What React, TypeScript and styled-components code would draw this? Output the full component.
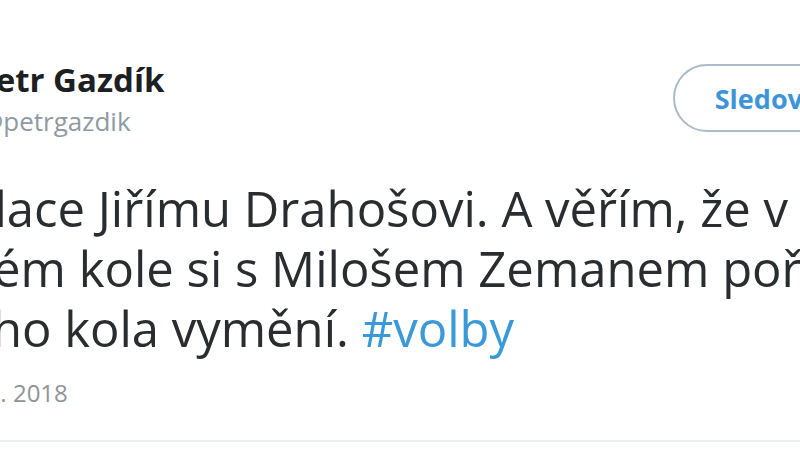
import React from "react";
import styled, { createGlobalStyle } from "styled-components";

const GlobalStyle = createGlobalStyle`
  html, body {
    margin: 0;
    padding: 0;
    background: #ffffff;
    overflow: hidden;
  }
  body {
    width: 800px;
    height: 450px;
    font-family: "Open Sans", "Noto Sans", sans-serif;
  }
`;

const Viewport = styled.div`
  width: 800px;
  height: 450px;
  overflow: hidden;
  position: relative;
`;

const Card = styled.article`
  width: 1100px;
  margin-left: -118px;
  padding-top: 60px;
  display: flex;
  flex-direction: column;
`;

const Header = styled.header`
  display: flex;
  align-items: center;
  padding-left: 93px;
  width: 1000px;
  box-sizing: border-box;
`;

const Names = styled.div`
  display: flex;
  flex-direction: column;
  flex: 1;
`;

const Name = styled.div`
  font-size: 33px;
  font-weight: 700;
  color: #1c2022;
  line-height: 40px;
`;

const Handle = styled.div`
  font-size: 26px;
  color: #8e9aa3;
  line-height: 30px;
  margin-top: 6px;
  margin-left: 5px;
`;

const FollowButton = styled.button`
  margin-left: auto;
  height: 68px;
  padding: 0 40px;
  border-radius: 34px;
  border: 2px solid #a9bcc8;
  background: #ffffff;
  color: #3d95d8;
  font-family: "Open Sans", "Noto Sans", sans-serif;
  font-size: 27px;
  font-weight: 700;
  transform: translate(-9px, 0px);
`;

const Text = styled.div`
  margin: 42px 0 0 -22px;
  font-size: 49px;
  line-height: 60px;
  color: #2a2d2f;
  white-space: nowrap;
  display: flex;
  flex-direction: column;
`;

const Line = styled.span<{ $shift: number }>`
  display: block;
  margin-left: ${(p) => p.$shift}px;
`;

const Hashtag = styled.span`
  color: #3a9ad9;
`;

const DateLine = styled.div`
  margin-top: 18px;
  font-size: 24px;
  color: #8e9499;
  margin-left: -3px;
`;

const Divider = styled.div`
  margin-top: 31px;
  height: 2px;
  background: #e9eef1;
`;

export default function App() {
  return (
    <Viewport>
      <GlobalStyle />
      <Card>
        <Header>
          <Names>
            <Name>Petr Gazdík</Name>
            <Handle>@petrgazdik</Handle>
          </Names>
          <FollowButton>Sledovat</FollowButton>
        </Header>
        <Text>
          <Line $shift={4}>Gratulace Jiřímu Drahošovi. A věřím, že v</Line>
          <Line $shift={23}>druhém kole si s Milošem Zemanem pořadí z</Line>
          <Line $shift={15}>
            prvního kola vymění. <Hashtag>#volby</Hashtag>
          </Line>
        </Text>
        <DateLine>9:56 - 13. 1. 2018</DateLine>
        <Divider />
      </Card>
    </Viewport>
  );
}
